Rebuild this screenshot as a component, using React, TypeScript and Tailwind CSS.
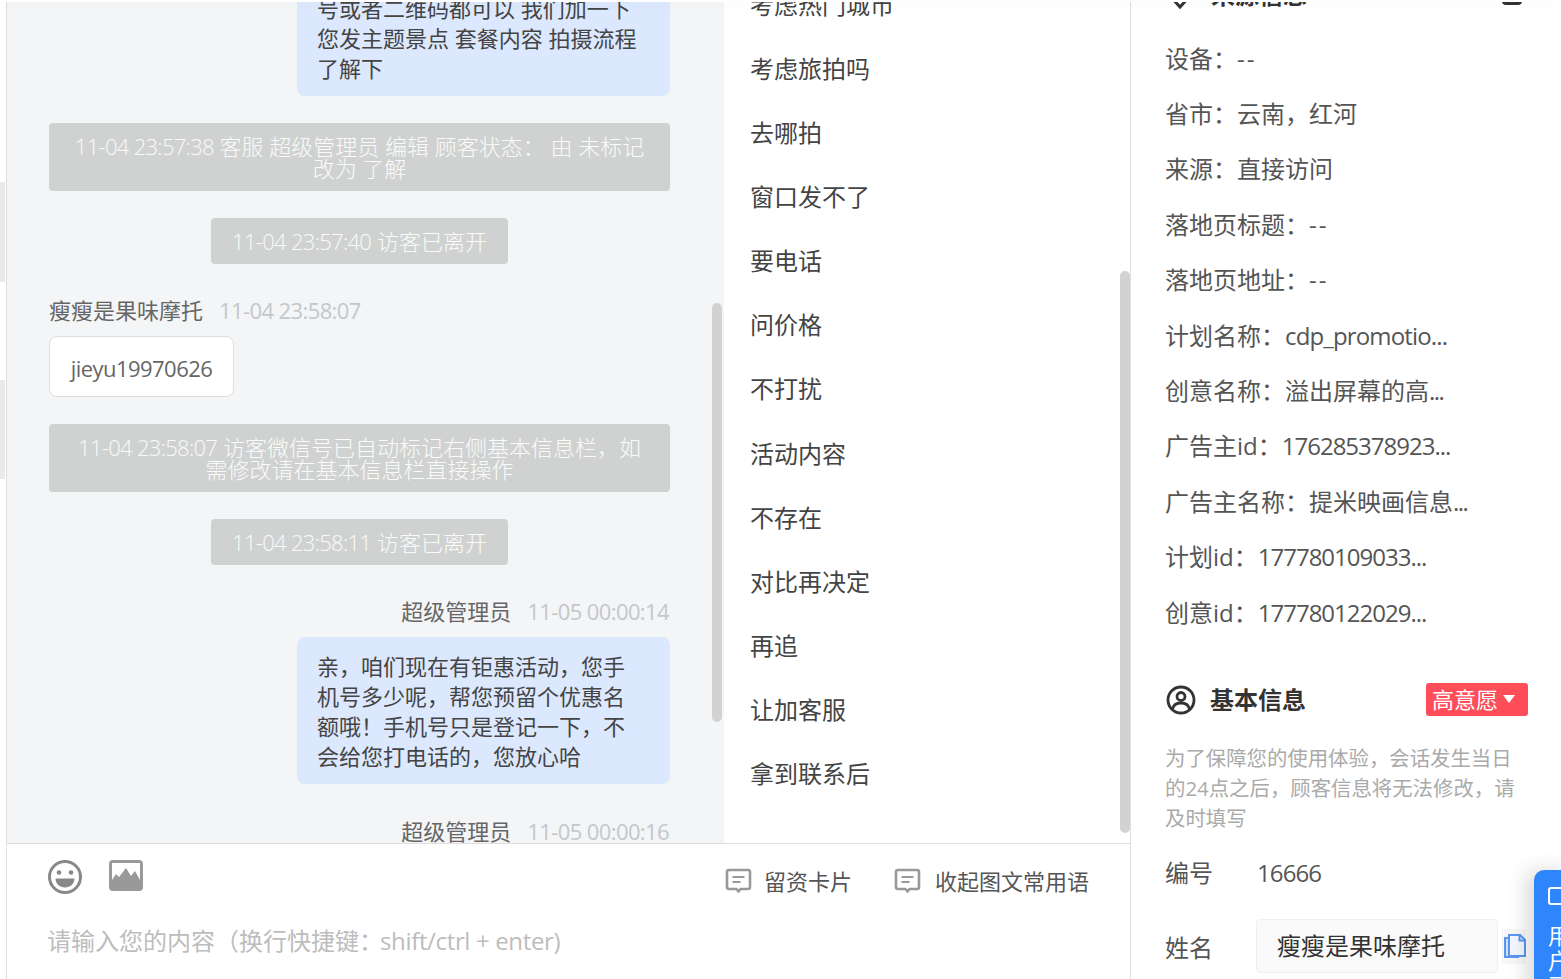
import React from "react";

const FONT = { fontFamily: '"Open Sans", "Noto Sans CJK SC", sans-serif' };

function L({ children }: { children: React.ReactNode }) {
  return <span className="tracking-[-0.7px]">{children}</span>;
}

function System({ children, wide }: { children: React.ReactNode; wide?: boolean }) {
  return (
    <div className="flex justify-center">
      <div className={`rounded-[4px] bg-[#d0d2d1] text-center text-[22px] font-light leading-[22px] text-[#fafafa] ${wide ? "w-full px-[20px] py-[12px]" : "px-[21px] py-[12px]"}`}>
        {children}
      </div>
    </div>
  );
}

function NameRow({ name, time, right }: { name: string; time: string; right?: boolean }) {
  return (
    <div className={`flex h-[24px] items-center gap-[16px] whitespace-nowrap text-[22px] ${right ? "justify-end pr-[1px]" : ""}`}>
      <span className="text-[#666]">{name}</span>
      <span className="tracking-[-0.6px] text-[#c4c7ca]">{time}</span>
    </div>
  );
}

function Bubble({ lines }: { lines: string[] }) {
  return (
    <div className="flex justify-end">
      <div className="w-[373px] rounded-[8px] bg-[#dce8fd] px-[20px] pb-[13px] pt-[14px] text-[22px] leading-[30px] text-[#444]">
        {lines.map((l) => (
          <div key={l} className="whitespace-nowrap">{l}</div>
        ))}
      </div>
    </div>
  );
}

function NoteIcon() {
  return (
    <svg width="27" height="26" viewBox="0 0 27 26" fill="none" stroke="#999" strokeWidth="2.600" strokeLinejoin="round">
      <path d="M4 2h19a2 2 0 0 1 2 2v15a2 2 0 0 1-2 2h-7.500l-2 2.500-2-2.500H4a2 2 0 0 1-2-2V4a2 2 0 0 1 2-2z" />
      <path d="M7.500 9h12M7.500 14h8" strokeWidth="2" />
    </svg>
  );
}

const phrases = ["考虑热门城市", "考虑旅拍吗", "去哪拍", "窗口发不了", "要电话", "问价格", "不打扰", "活动内容", "不存在", "对比再决定", "再追", "让加客服", "拿到联系后"];

const sourceRows: [string, string, string][] = [
  ["设备：", "--", "tracking-[2px]"],
  ["省市：云南，红河", "", ""],
  ["来源：直接访问", "", ""],
  ["落地页标题：", "--", "tracking-[2px]"],
  ["落地页地址：", "--", "tracking-[2px]"],
  ["计划名称：", "cdp_promotio...", "tracking-[-0.85px]"],
  ["创意名称：溢出屏幕的高", "...", "tracking-[-1.5px]"],
  ["广告主id：", "176285378923...", "tracking-[-1px]"],
  ["广告主名称：提米映画信息", "...", "tracking-[-1.5px]"],
  ["计划id：", "177780109033...", "tracking-[-1px]"],
  ["创意id：", "177780122029...", "tracking-[-1px]"],
];

export default function App() {
  return (
    <div className="relative flex h-[979px] w-[1561px] overflow-hidden bg-white" style={FONT}>
      <div className="absolute left-0 top-0 z-20 h-[2px] w-full bg-white shadow-[0_2px_10px_rgba(0,0,0,0.06)]" />
      <div className="absolute left-0 top-[182px] h-[100px] w-[5px] bg-[#e9e9e9]" />
      <div className="absolute left-0 top-[380px] h-[99px] w-[5px] bg-[#e9e9e9]" />

      <div className="w-[6px] shrink-0" />

      <main className="flex w-[1125px] shrink-0 flex-col border-x border-[#dfdfdf]">
        <div className="relative flex h-[844px] shrink-0 border-b border-[#dedede]">
          <section className="relative flex w-[717px] shrink-0 flex-col justify-end overflow-hidden bg-[#f4f5f7] pl-[42px] pr-[54px] [&>*]:shrink-0">
            <Bubble lines={["号或者二维码都可以 我们加一下", "您发主题景点 套餐内容 拍摄流程", "了解下"]} />
            <div className="mt-[27px]">
              <System wide><L>11-04 23:57:38</L> 客服 超级管理员 编辑 顾客状态： 由 未标记<br />改为 了解</System>
            </div>
            <div className="mt-[27px]"><System><L>11-04 23:57:40</L> 访客已离开</System></div>
            <div className="mt-[34px]"><NameRow name="瘦瘦是果味摩托" time="11-04 23:58:07" /></div>
            <div className="mt-[14px] flex h-[61px] w-[185px] items-center justify-center rounded-[8px] border border-[#dedede] bg-white pt-[3px] text-[22px] tracking-[-0.55px] text-[#666]">jieyu19970626</div>
            <div className="mt-[27px]">
              <System wide><L>11-04 23:58:07</L> 访客微信号已自动标记右侧基本信息栏，如<br />需修改请在基本信息栏直接操作</System>
            </div>
            <div className="mt-[27px]"><System><L>11-04 23:58:11</L> 访客已离开</System></div>
            <div className="mt-[34px]"><NameRow right name="超级管理员" time="11-05 00:00:14" /></div>
            <div className="mt-[14px]">
              <Bubble lines={["亲，咱们现在有钜惠活动，您手", "机号多少呢，帮您预留个优惠名", "额哦！手机号只是登记一下，不", "会给您打电话的，您放心哈"]} />
            </div>
            <div className="mt-[35px]"><NameRow right name="超级管理员" time="11-05 00:00:16" /></div>
            <div className="absolute left-[705px] top-[303px] h-[419px] w-[10px] rounded-full bg-[#d2d2d2]" />
          </section>

          <section className="relative flex flex-1 flex-col justify-end overflow-hidden pb-[36.5px] pl-[26px]">
            {phrases.map((p) => (
              <div key={p} className="flex h-[64.17px] shrink-0 items-center text-[24px] text-[#444]">{p}</div>
            ))}
            <div className="absolute right-0 top-[271px] h-[562px] w-[10px] rounded-full bg-[#d2d2d2]" />
          </section>
        </div>

        <div className="flex-1 pl-[41px] pr-[41px]">
          <div className="flex items-start justify-between pt-[16px]">
            <div className="flex gap-[27px]">
              <svg width="34" height="34" viewBox="0 0 34 34" fill="none">
                <circle cx="17" cy="17" r="15.500" stroke="#888" strokeWidth="3" />
                <circle cx="11" cy="12.500" r="2.300" fill="#888" />
                <circle cx="23" cy="12.500" r="2.300" fill="#888" />
                <path d="M7.500 18.500h19c0 5-4 9-9.500 9s-9.500-4-9.500-9z" fill="#888" />
              </svg>
              <svg width="34" height="31" viewBox="0 0 34 31">
                <rect width="34" height="31" rx="4" fill="#999" />
                <path d="M3 3h28v17l-5-9-4 5-5-8-7 9-3-3-4 6z" fill="#fff" />
              </svg>
            </div>
            <div className="mt-[6px] flex items-center text-[22px] leading-[30px] text-[#555]">
              <NoteIcon />
              <span className="ml-[12px]">留资卡片</span>
              <span className="ml-[42px]"><NoteIcon /></span>
              <span className="ml-[14px]">收起图文常用语</span>
            </div>
          </div>
          <div className="-ml-[1px] mt-[28px] whitespace-nowrap text-[24px] leading-[34px] text-[#bdbdbd]">请输入您的内容（换行快捷键：<span className="-ml-[3px] tracking-[-0.35px]">shift/ctrl + enter)</span></div>
        </div>
      </main>

      <aside className="relative flex-1 pl-[34px] pr-[33px]">
        <div className="-mt-[22px] flex h-[34px] items-center justify-between text-[24px] font-bold text-[#333]">
          <div className="flex items-center gap-[16px]">
            <svg width="30" height="34" viewBox="0 0 30 34" fill="none" stroke="#333" strokeWidth="3">
              <path d="M15 29 5 18a12 12 0 1 1 20 0z" />
            </svg>
            <span>来源信息</span>
          </div>
          <div className="mr-[6px] h-[20px] w-[20px] rounded-[4px] border-[3px] border-[#333]" />
        </div>
        <div className="mt-[19px]">
          {sourceRows.map(([a, b, t]) => (
            <div key={a} className="flex h-[55.4px] items-center whitespace-nowrap text-[24px] text-[#555]">
              <span>{a}</span>
              {b && <span className={t}>{b}</span>}
            </div>
          ))}
        </div>
        <div className="mt-[42px] flex h-[34px] items-center justify-between">
          <div className="ml-[1px] flex items-center gap-[14px] pt-[2px] text-[24px] font-bold text-[#333]">
            <svg width="30" height="30" viewBox="0 0 30 30" fill="none" stroke="#333" strokeWidth="2.800">
              <circle cx="15" cy="15" r="13" />
              <circle cx="15" cy="11.500" r="4" />
              <path d="M6.500 24c1-4.500 4.500-6 8.500-6s7.500 1.500 8.500 6" />
            </svg>
            <span>基本信息</span>
          </div>
          <div className="flex h-[33px] w-[102px] items-center gap-[5px] rounded-[3px] bg-[#ff4d5a] pl-[6px] text-[22px] text-white">
            高意愿
            <svg width="12" height="8" viewBox="0 0 12 8"><path d="M0 0h12L6 8z" fill="#fff" /></svg>
          </div>
        </div>
        <div className="mt-[27px] w-[355px] text-[20.4px] leading-[30px] text-[#aaa]">为了保障您的使用体验，会话发生当日的24点之后，顾客信息将无法修改，请及时填写</div>
        <div className="mt-[23px] flex h-[34px] items-center text-[24px] text-[#555]">
          <span className="w-[92px]">编号</span>
          <span className="tracking-[-0.9px]">16666</span>
        </div>
        <div className="mt-[29px] flex items-center text-[24px]">
          <span className="mt-[4px] w-[91px] text-[#555]">姓名</span>
          <div className="flex h-[54px] w-[242px] items-center rounded-[4px] border border-[#f0f0f0] bg-[#fafafa] pl-[20px] text-[#333]">瘦瘦是果味摩托</div>
          <div className="ml-[4px] flex h-[35px] w-[24px] items-center justify-center bg-[#f7f7f7]">
            <svg width="23" height="24" viewBox="0 0 23 24" fill="none" stroke="#5c96f2" strokeWidth="2">
              <path d="M2 4h13v19H2z" fill="#cfe0fb" />
              <path d="M6 1h11l5 5v16H6z" fill="#f4f8fe" />
              <path d="M16.500 1v5.500H22" />
            </svg>
          </div>
        </div>

        <div className="absolute left-[403px] top-[870px] h-[130px] w-[40px] overflow-hidden rounded-tl-[10px] bg-[#2f85fb] pl-[14px] pt-[17px] text-[22px] leading-[25px] text-white shadow-[-8px_0_20px_rgba(0,0,0,0.14)]">
          <div className="mb-[18px] h-[18px] w-[24px] rounded-[3px] border-2 border-white" />
          <div className="w-[24px]">用户画像</div>
        </div>
      </aside>
    </div>
  );
}
